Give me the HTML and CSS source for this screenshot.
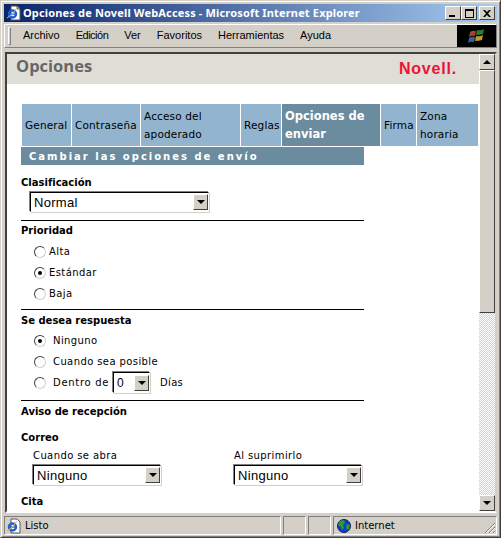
FILE: index.html
```html
<!DOCTYPE html>
<html lang="es">
<head>
    <meta charset="UTF-8">
    <title>Opciones de Novell WebAccess</title>
    <link rel="stylesheet" href="styles.css">
</head>
<body>
<div class="window">
    <div class="titlebar">
        <svg class="ie-icon" width="16" height="16" viewBox="0 0 16 16">
            <path d="M5 1h6l3 3v11H5z" fill="#fff" stroke="#555"/>
            <path d="M11 1v3h3" fill="#ccc" stroke="#555"/>
            <circle cx="6.500" cy="9" r="3.500" fill="none" stroke="#1c5fd8" stroke-width="2.500"/>
            <rect x="3" y="8.500" width="7" height="1.200" fill="#1c5fd8"/>
            <path d="M1 13Q6 11 11 3" fill="none" stroke="#e8c040"/>
        </svg>
        <span class="title-text">Opciones de Novell WebAccess - Microsoft Internet Explorer</span>
        <div class="win-buttons">
            <button class="win-btn"><span class="min-glyph"></span></button>
            <button class="win-btn"><span class="max-glyph"></span></button>
            <button class="win-btn close-btn">
                <svg width="8" height="7" viewBox="0 0 8 7"><path d="M0 0h2l2 2 2-2h2L5 3.500 8 7H6L4 5 2 7H0l3-3.500z" fill="#000"/></svg>
            </button>
        </div>
    </div>
    <div class="menubar">
        <div class="grip"></div>
        <div class="menu">
            <span>Archivo</span>
            <span class="menu-tight">Edición</span>
            <span>Ver</span>
            <span>Favoritos</span>
            <span>Herramientas</span>
            <span>Ayuda</span>
        </div>
        <div class="throbber">
            <svg width="20" height="18" viewBox="0 0 20 18">
                <path d="M3 5Q6 3 9 4L8 9Q5 8 2 10z" fill="#a8402e"/>
                <path d="M10 3Q13 4 17 2L16 7Q13 8 9 8z" fill="#2f7a34"/>
                <path d="M2 11Q5 9 8 10L7 15Q4 14 1 16z" fill="#3a5f9c"/>
                <path d="M9 9Q12 10 16 8L15 13Q12 14 8 14z" fill="#c09a24"/>
            </svg>
        </div>
    </div>
    <div class="frame">
        <div class="page">
            <div class="page-header">
                <h1>Opciones</h1>
                <span class="logo">Novell<i>.</i></span>
            </div>
            <div class="content">
                <div class="tabs">
                    <a class="tab tab-general">General</a>
                    <a class="tab tab-pass">Contraseña</a>
                    <a class="tab tab-proxy">Acceso del apoderado</a>
                    <a class="tab tab-rules">Reglas</a>
                    <a class="tab tab-send active">Opciones de enviar</a>
                    <a class="tab tab-sign">Firma</a>
                    <a class="tab tab-zone">Zona horaria</a>
                </div>
                <div class="form">
                    <div class="section-title">Cambiar las opciones de envío</div>

                    <div class="group group-class">
                        <div class="label">Clasificación</div>
                        <div class="select select-class"><span>Normal</span><b class="drop"></b></div>
                    </div>

                    <div class="group group-priority">
                        <div class="label">Prioridad</div>
                        <div class="radios">
                            <div class="radio-row"><i class="radio"></i><span>Alta</span></div>
                            <div class="radio-row"><i class="radio on"></i><span>Estándar</span></div>
                            <div class="radio-row"><i class="radio"></i><span>Baja</span></div>
                        </div>
                    </div>

                    <div class="group group-reply">
                        <div class="label">Se desea respuesta</div>
                        <div class="radios wide">
                            <div class="radio-row"><i class="radio on"></i><span>Ninguno</span></div>
                            <div class="radio-row"><i class="radio"></i><span>Cuando sea posible</span></div>
                            <div class="radio-row days">
                                <i class="radio"></i><span class="days-text">Dentro de</span>
                                <div class="select select-days"><span>0</span><b class="drop"></b></div>
                                <span class="days-label">Días</span>
                            </div>
                        </div>
                    </div>

                    <div class="group group-notice">
                        <div class="label">Aviso de recepción</div>
                        <div class="label label-mail">Correo</div>
                        <div class="mail-cols">
                            <div class="mail-col">
                                <div class="sublabel">Cuando se abra</div>
                                <div class="select select-mail"><span>Ninguno</span><b class="drop"></b></div>
                            </div>
                            <div class="mail-col">
                                <div class="sublabel">Al suprimirlo</div>
                                <div class="select select-mail"><span>Ninguno</span><b class="drop"></b></div>
                            </div>
                        </div>
                        <div class="label label-cita">Cita</div>
                    </div>
                </div>
            </div>
        </div>
        <div class="scrollbar">
            <div class="sb-btn"><i class="arrow-up"></i></div>
            <div class="sb-thumb"></div>
            <div class="sb-track"></div>
            <div class="sb-btn"><i class="arrow-down"></i></div>
        </div>
    </div>
    <div class="statusbar">
        <div class="st-main">
            <svg width="16" height="16" viewBox="0 0 16 16">
                <path d="M5 1h6l3 3v11H5z" fill="#fff" stroke="#555"/>
                <circle cx="6.500" cy="9" r="3.500" fill="none" stroke="#1c5fd8" stroke-width="2.500"/>
                <rect x="3" y="8.500" width="7" height="1.200" fill="#1c5fd8"/>
                <path d="M1 13Q6 11 11 3" fill="none" stroke="#e8c040"/>
            </svg>
            <span>Listo</span>
        </div>
        <div class="st-cell st-small"></div>
        <div class="st-cell st-small"></div>
        <div class="st-zone">
            <svg width="16" height="16" viewBox="0 0 16 16">
                <circle cx="8" cy="8" r="6.500" fill="#1838c8" stroke="#102060"/>
                <path d="M4 3l4-1 1 3-2 2 1 3-2 2-1-3-3-2zM11 6l3 1-1 4-2 1-1-3z" fill="#28a028"/>
            </svg>
            <span>Internet</span>
            <svg class="grip-corner" width="12" height="12" viewBox="0 0 12 12">
                <path d="M11 1L1 11M11 5L5 11M11 9L9 11" stroke="#808080" fill="none"/>
                <path d="M11 2L2 11M11 6L6 11M11 10L10 11" stroke="#fff" fill="none"/>
            </svg>
        </div>
    </div>
</div>
</body>
</html>
```

FILE: styles.css
```css
* {
    margin: 0;
    padding: 0;
    box-sizing: border-box;
    font-family: "Liberation Sans", Arial, sans-serif;
}
html, body {
    width: 501px;
    height: 538px;
    overflow: hidden;
}
.window {
    width: 501px;
    height: 538px;
    background: #d4d0c8;
    border: 1px solid #404040;
    border-top-color: #d4d0c8;
    border-left-color: #d4d0c8;
    padding: 3px 3px 2px;
    display: flex;
    flex-direction: column;
    box-shadow: inset 1px 1px 0 #fff, inset -1px -1px 0 #808080;
}
.titlebar {
    height: 18px;
    flex: none;
    display: flex;
    align-items: center;
    background: linear-gradient(to right, #0a246a, #a6caf0);
    color: #fff;
    padding: 0 2px;
}
.ie-icon {
    flex: none;
}
.title-text {
    margin-left: 1px;
    padding-bottom: 2px;
    font-family: "Noto Sans", sans-serif;
    font-size: 11px;
    font-weight: bold;
    letter-spacing: 0.16px;
    white-space: nowrap;
}
.win-buttons {
    margin-left: auto;
    display: flex;
}
.win-btn {
    width: 16px;
    height: 14px;
    background: #d4d0c8;
    border: 1px solid #404040;
    border-top-color: #fff;
    border-left-color: #fff;
    display: flex;
    align-items: center;
    justify-content: center;
}
.close-btn {
    margin-left: 2px;
}
.min-glyph {
    width: 6px;
    height: 2px;
    background: #000;
    margin-top: 6px;
    margin-right: 2px;
}
.max-glyph {
    width: 9px;
    height: 9px;
    border: 1px solid #000;
    border-top-width: 2px;
}
.menubar {
    height: 24px;
    margin-top: 2px;
    flex: none;
    display: flex;
    align-items: center;
    border: 1px solid #808080;
    border-top-color: #fff;
    border-left-color: #fff;
    background: repeating-conic-gradient(#d8d4cc 0 25%, #cfcbc3 0 50%) 0 0 / 2px 2px;
}
.grip {
    width: 3px;
    height: 18px;
    margin-left: 3px;
    background: #d4d0c8;
    border: 1px solid #808080;
    border-top-color: #fff;
    border-left-color: #fff;
}
.menu {
    display: flex;
    margin-left: 12px;
    padding-bottom: 2px;
    gap: 16px;
    font-size: 11px;
    color: #000;
}
.menu-tight {
    letter-spacing: -0.500px;
}
.throbber {
    margin-left: auto;
    width: 39px;
    height: 22px;
    background: #000;
    display: flex;
    align-items: center;
    justify-content: center;
}
.frame {
    margin: 4px 0 0 1px;
    flex: 1;
    min-height: 0;
    display: flex;
    background: #fff;
    border: 2px solid #404040;
    border-right-color: #d4d0c8;
    border-bottom-color: #fff;
    overflow: hidden;
}
.page {
    flex: 1;
    min-width: 0;
    overflow: hidden;
    background: #fff;
}
.page-header {
    height: 30px;
    background: #deded6;
    display: flex;
    justify-content: space-between;
    align-items: flex-start;
    padding: 0 22px 0 9px;
}
.page-header h1 {
    font-family: "Open Sans", sans-serif;
    font-size: 16.500px;
    font-weight: bold;
    color: #666;
}
.logo {
    margin-top: 6px;
    font-size: 16px;
    font-weight: bold;
    color: #ee1133;
    letter-spacing: 0.800px;
}
.logo i {
    font-style: normal;
}
.content {
    padding: 20px 0 0 14px;
}
.tabs {
    display: flex;
    height: 42px;
    margin-left: 1px;
    gap: 1px;
}
.tab {
    flex: none;
    background: #93b4cf;
    display: flex;
    align-items: center;
    padding: 0 3px;
    font-family: "DejaVu Sans", sans-serif;
    font-size: 10.500px;
    letter-spacing: 0.150px;
    line-height: 18px;
    color: #000;
}
.tab-general { width: 49px; }
.tab-pass { width: 68px; }
.tab-proxy { width: 99px; }
.tab-rules { width: 40px; }
.tab-send { width: 98px; }
.tab-sign { width: 35px; }
.tab-zone { width: 61px; }
.tab.active {
    background: #6b8c9f;
    color: #fff;
    font-weight: bold;
    font-size: 11.500px;
    letter-spacing: 0;
}
.form {
    width: 343px;
}
.section-title {
    margin-top: 1px;
    height: 18px;
    background: #6b8c9f;
    color: #fff;
    font-size: 10px;
    font-weight: bold;
    font-family: "DejaVu Sans", sans-serif;
    letter-spacing: 2px;
    line-height: 19px;
    padding-left: 8px;
    white-space: nowrap;
    overflow: hidden;
}
.group {
    border-bottom: 1px solid #000;
}
.group-notice {
    border-bottom: none;
    padding-top: 4px;
}
.label {
    font-weight: bold;
    font-family: "DejaVu Sans", sans-serif;
    font-size: 10px;
    line-height: 14px;
    color: #000;
}
.group-class {
    height: 56px;
    padding-top: 11px;
}
.select {
    display: flex;
    align-items: center;
    justify-content: space-between;
    height: 20px;
    background: #fff;
    border: 1px solid #000;
    border-right-color: #fff;
    border-bottom-color: #fff;
    box-shadow: -1px -1px 0 #808080, 1px 1px 0 #d4d0c8;
    font-size: 13px;
    letter-spacing: 0.300px;
    padding-left: 3px;
    color: #000;
}
.select-class {
    width: 179px;
    margin: 2px 0 0 9px;
}
.drop {
    width: 15px;
    height: 16px;
    flex: none;
    background: #d4d0c8;
    border: 1px solid #404040;
    border-top-color: #fff;
    border-left-color: #fff;
    position: relative;
}
.drop::after {
    content: "";
    position: absolute;
    left: 3px;
    top: 5px;
    border: 4px solid transparent;
    border-top-color: #000;
    border-bottom: none;
}
.group-priority {
    height: 89px;
    padding-top: 3px;
}
.radios {
    margin: 3px 0 0 13px;
}
.wide {
    margin-top: 2px;
}
.radio-row {
    height: 21px;
    display: flex;
    align-items: center;
    gap: 3px;
    color: #000;
}
.radio-row span {
    font-family: "DejaVu Sans", sans-serif;
    font-size: 10px;
    letter-spacing: 0.400px;
}
.wide .radio-row {
    gap: 7px;
}
.radio {
    width: 12px;
    height: 12px;
    border-radius: 50%;
    background: #fff;
    border: 1px solid #404040;
    border-right-color: #d4d0c8;
    border-bottom-color: #d4d0c8;
    display: flex;
    align-items: center;
    justify-content: center;
    flex: none;
}
.radio.on::after {
    content: "";
    width: 4px;
    height: 4px;
    border-radius: 50%;
    background: #000;
}
.group-reply {
    height: 91px;
    padding-top: 4px;
}
.radio-row .days-text {
    letter-spacing: 0.700px;
}
.select-days {
    width: 37px;
    height: 21px;
    margin-left: -3px;
    flex: none;
}
.radio-row .select-days span {
    font-family: "Liberation Sans", Arial, sans-serif;
    font-size: 12px;
    letter-spacing: 0;
}
.radio-row .days-label {
    margin-left: 3px;
    letter-spacing: 0.300px;
}
.label-mail {
    margin-top: 12px;
}
.mail-cols {
    display: flex;
    margin-left: 12px;
    margin-top: 4px;
}
.mail-col {
    flex: none;
    width: 201px;
}
.sublabel {
    font-family: "DejaVu Sans", sans-serif;
    font-size: 10px;
    letter-spacing: 0.400px;
    line-height: 14px;
    color: #000;
    margin-bottom: 2px;
}
.select-mail {
    width: 128px;
}
.label-cita {
    margin-top: 10px;
}
.scrollbar {
    width: 16px;
    flex: none;
    display: flex;
    flex-direction: column;
    background: #d4d0c8;
}
.sb-btn {
    height: 16px;
    flex: none;
    background: #d4d0c8;
    border: 1px solid #404040;
    border-top-color: #fff;
    border-left-color: #fff;
    display: flex;
    align-items: center;
    justify-content: center;
}
.arrow-up {
    border: 4px solid transparent;
    border-bottom-color: #000;
    border-top: none;
}
.arrow-down {
    border: 4px solid transparent;
    border-top-color: #000;
    border-bottom: none;
}
.sb-thumb {
    height: 243px;
    flex: none;
    background: repeating-conic-gradient(#d8d4cc 0 25%, #cfcbc3 0 50%) 0 0 / 2px 2px;
    border: 1px solid #404040;
    border-top-color: #fff;
    border-left-color: #fff;
}
.sb-track {
    flex: 1;
    background: repeating-conic-gradient(#d4d0c8 0 25%, #fff 0 50%) 0 0 / 2px 2px;
}
.statusbar {
    height: 19px;
    margin-top: 3px;
    flex: none;
    display: flex;
    gap: 2px;
    color: #000;
    background: repeating-conic-gradient(#d8d4cc 0 25%, #cfcbc3 0 50%) 0 0 / 2px 2px;
}
.st-main span, .st-zone span {
    font-family: "DejaVu Sans", sans-serif;
    font-size: 10px;
}
.st-main, .st-cell, .st-zone {
    display: flex;
    align-items: center;
    border: 1px solid #fff;
    border-top-color: #808080;
    border-left-color: #808080;
}
.st-main {
    flex: 1;
    gap: 3px;
    padding-left: 1px;
}
.st-small {
    width: 23px;
}
.st-zone {
    width: 164px;
    gap: 3px;
    padding-left: 2px;
    position: relative;
}
.grip-corner {
    position: absolute;
    right: 0;
    bottom: 0;
}
```
